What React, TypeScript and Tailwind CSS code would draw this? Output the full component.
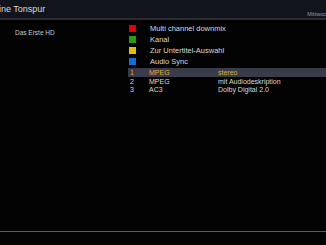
import React from "react";

const font = { fontFamily: '"Liberation Sans", Arial, sans-serif' };

export default function App() {
  const keys = [
    { c: "bg-[#e00000]", t: "Multi channel downmix" },
    { c: "bg-[#2a9a10]", t: "Kanal" },
    { c: "bg-[#e0c000]", t: "Zur Untertitel-Auswahl" },
    { c: "bg-[#1070d8]", t: "Audio Sync" },
  ];
  const rows = [
    { n: "1", a: "MPEG", b: "stereo", sel: true },
    { n: "2", a: "MPEG", b: "mit Audiodeskription" },
    { n: "3", a: "AC3", b: "Dolby Digital 2.0" },
  ];
  return (
    <div className="w-[326px] h-[245px] bg-[#030303] flex flex-col overflow-hidden" style={font}>
      <div className="h-[18px] bg-[#12141c] flex items-end justify-between">
        <div className="text-[9px] leading-none text-[#d8d8d8] pb-[4px] -ml-[1px]">ine Tonspur</div>
        <div className="text-[5.5px] leading-none text-[#9a9aa0] pb-[1px] -mr-[3px]">Mittwoch</div>
      </div>
      <div className="h-[2px] bg-[#2a2c32]" />
      <div className="flex flex-1">
        <div className="w-[128px] pt-[10px] pl-[15px]">
          <div className="text-[6.5px] leading-none text-[#c8c8c8]">Das Erste HD</div>
        </div>
        <div className="flex-1 flex flex-col pt-[3px]">
          {keys.map((k) => (
            <div key={k.t} className="flex items-center h-[11px]">
              <div className={`w-[7px] h-[7px] ml-[1px] ${k.c}`} />
              <div className="ml-[14px] text-[7.5px] leading-none text-[#d8d8d8]">{k.t}</div>
            </div>
          ))}
          <div className="mt-[1px] flex flex-col">
            {rows.map((r) => (
              <div
                key={r.n}
                className={`flex items-center h-[8px] text-[7px] leading-none ${
                  r.sel ? "bg-[#3a3b48] text-[#d8b040] h-[9px]" : "text-[#d8d8d8]"
                }`}
              >
                <div className="w-[21px] pl-[2px]">{r.n}</div>
                <div className="w-[69px]">{r.a}</div>
                <div>{r.b}</div>
              </div>
            ))}
          </div>
        </div>
      </div>
      <div className="h-[1px] bg-[#5a5a5a] mb-[13px]" />
    </div>
  );
}
